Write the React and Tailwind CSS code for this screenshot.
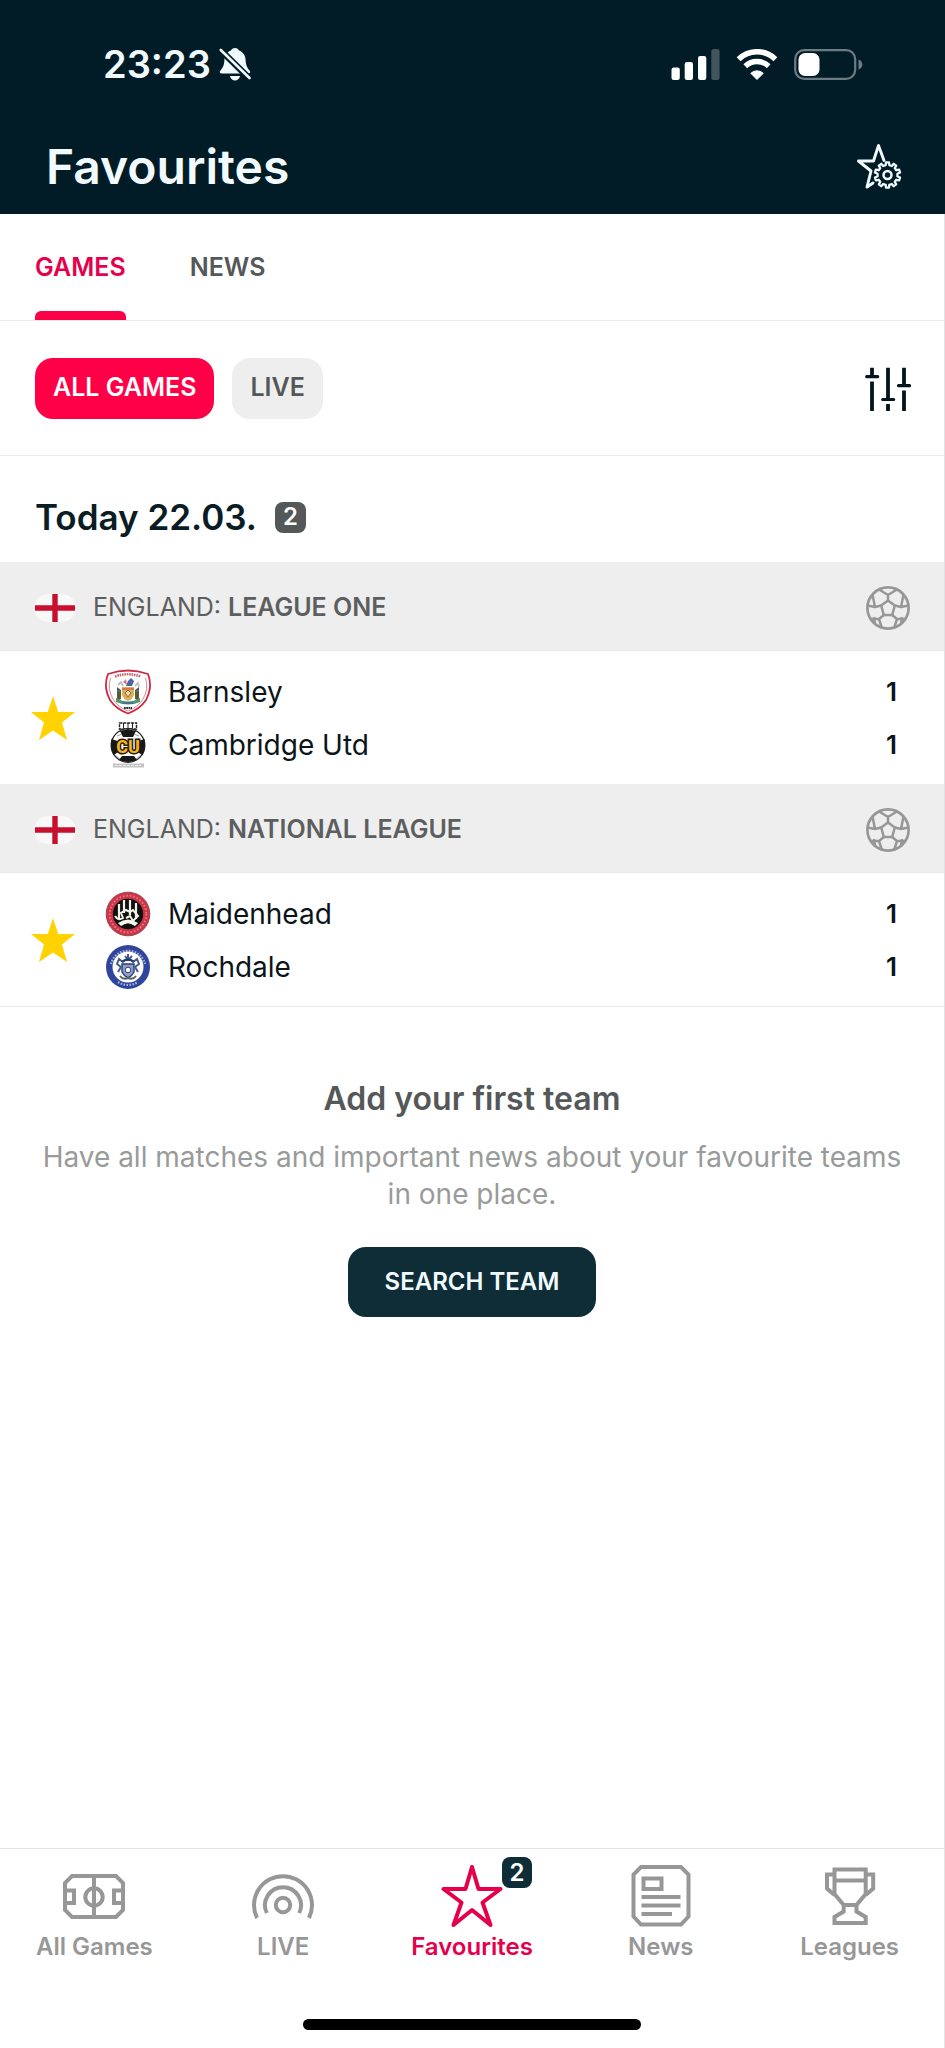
import { useState } from 'react';

const BellOff = () => (
  <svg viewBox="0 0 34 34" className="h-[34px] w-[34px]" aria-hidden="true">
    <path d="M16 1c-2 0-3.400 1-4 2.600C8 5 5.600 8.500 5.400 13c-.2 5-1.400 7.500-4 10.500C.2 25 .8 26.500 2.600 26.500h26.800c1.800 0 2.400-1.500 1.200-3-2.600-3-3.800-5.500-4-10.500C26.400 8.500 24 5 20 3.600 19.400 2 18 1 16 1z" fill="#f1fbff" />
    <path d="M11 29h10c-.6 2.800-2.500 4.500-5 4.500S11.600 31.800 11 29z" fill="#f1fbff" />
    <path d="M0 1.500l32 31.500" stroke="#011c26" strokeWidth="6.500" />
    <path d="M1.800 3l28.700 28" stroke="#f1fbff" strokeWidth="2.600" strokeLinecap="round" />
  </svg>
);

const Signal = () => (
  <svg viewBox="0 0 49 31" className="h-[31px] w-[49px]" aria-hidden="true">
    <g fill="#fff">
      <rect x="0.500" y="18.500" width="8.300" height="12.500" rx="2.200" />
      <rect x="13.700" y="13" width="8.300" height="18" rx="2.200" />
      <rect x="27" y="7" width="8.300" height="24" rx="2.200" />
      <rect x="40.300" y="0" width="8.300" height="31" rx="2.200" fillOpacity="0.250" />
    </g>
  </svg>
);

const Wifi = () => (
  <svg viewBox="0 0 42 31" className="h-[31px] w-[42px]" aria-hidden="true">
    <path d="M2.600 10.200a26.500 26.500 0 0 1 36.800 0" fill="none" stroke="#fff" strokeWidth="5.600" />
    <path d="M9.300 17.200a17 17 0 0 1 23.400 0" fill="none" stroke="#fff" strokeWidth="5.400" />
    <path d="M21 30.500l-6.200-6.200a9 9 0 0 1 12.400 0z" fill="#fff" stroke="#fff" strokeLinejoin="round" />
  </svg>
);

const Battery = () => (
  <svg viewBox="0 0 69 31" className="h-[31px] w-[69px]" aria-hidden="true">
    <rect x="1.200" y="1.200" width="60" height="28.600" rx="9" fill="none" stroke="#6b7c84" strokeWidth="2.200" />
    <path d="M64.500 10.500c2.600.8 3.800 2.700 3.800 5s-1.200 4.200-3.800 5z" fill="#6b7c84" />
    <rect x="4.500" y="4" width="21" height="23" rx="6.500" fill="#fff" />
  </svg>
);

// toothed outline for the settings gear
const gearPath = (cx, cy, outer, inner, teeth) => {
  const step = (Math.PI * 2) / teeth;
  const pts = [];
  for (let i = 0; i < teeth; i++) {
    const a = i * step - Math.PI / 2;
    [[-0.29, inner], [-0.19, outer], [0.19, outer], [0.29, inner]].forEach(([o, r]) => {
      pts.push(`${(cx + r * Math.cos(a + o * step)).toFixed(2)} ${(cy + r * Math.sin(a + o * step)).toFixed(2)}`);
    });
  }
  return `M${pts.join('L')}Z`;
};

const StarSettings = () => (
  <svg viewBox="0 0 45 45" className="h-[45px] w-[45px]" fill="none" stroke="#f1fbff" strokeWidth="2.900" strokeLinejoin="round" aria-hidden="true">
    <path d="M27 16.500L21.500 1.500 16.500 17H1.500l12.500 10-4 16 6-4" strokeLinecap="round" />
    <path d={gearPath(30.500, 31, 12.800, 10, 10)} strokeWidth="2.300" />
    <circle cx="30.500" cy="31" r="4" strokeWidth="2.500" />
  </svg>
);

const Sliders = () => (
  <svg viewBox="0 0 46 46" className="h-[46px] w-[46px]" fill="none" stroke="#04161d" aria-hidden="true">
    <path d="M7 .7V9M7 14.500V44M23 .7V32M23 37v7M39 .7V18M39 23.500V44" strokeWidth="3.800" />
    <path d="M1.700 9.700h11M17.700 32.500h11M33.500 18.700h11" strokeLinecap="round" strokeWidth="3.200" />
  </svg>
);

const Ball = () => (
  <svg viewBox="0 0 44 44" className="h-11 w-11 shrink-0" fill="none" stroke="#979797" strokeWidth="2.500" strokeLinejoin="round" aria-hidden="true">
    <circle cx="22" cy="22" r="20.600" strokeWidth="2.700" />
    <path d="M22 14.500l6.800 5-2.600 9.500h-8.400l-2.600-9.500z" />
    <path d="M22 14.500V9M13 3.500L22 9l9-5.500M28.800 19.500L35 21M37.500 8.500L35 21l7.500-1.500M15.200 19.500L9 21M6.500 8.500L9 21l-7.500-1.500" />
    <path d="M26.200 29l4.800 4M39 33h-8l-3 9.500M17.800 29L13 33M5 33h8l3 9.500M36 31l-1 7M8 31l1 7" />
  </svg>
);

const England = () => (
  <svg viewBox="0 0 40 28" className="h-7 w-10 shrink-0" role="img" aria-label="England">
    <rect width="40" height="28" rx="14" ry="11" fill="#f8f8f8" />
    <path d="M0 14h40M20 0v28" stroke="#c8102e" strokeWidth="5.400" />
  </svg>
);

const GoldStar = () => (
  <svg viewBox="0 0 44 44" className="h-11 w-11" aria-hidden="true">
    <path d="M22 0l5.200 16H44L31 26.500 36 44l-14-9.500L8 44l5-17.500L0 16h16.800z" fill="#ffd200" />
  </svg>
);

const Barnsley = () => (
  <svg viewBox="0 0 46 46" className="h-[46px] w-[46px]" aria-hidden="true">
    <path d="M3 5Q23-2 43 5q5 13-2 26-6 9-18 13.500Q11 40 5 31-2 18 3 5z" fill="#fff" stroke="#cc2b45" strokeWidth="1.800" />
    <path d="M5.500 9Q2 20 8 30q5 8 15 12M40.500 9Q44 20 38 30q-5 8-15 12" fill="none" stroke="#de8796" />
    <path d="M10 7.500Q23 3 36 7.500" fill="none" stroke="#cf6474" strokeWidth="2.600" strokeDasharray="1.600 .8" />
    <path d="M13 16l3-3 2 4M30 17l3-3 1 4" fill="none" stroke="#b9bfc3" strokeWidth="1.800" />
    <path d="M23 12l3-3 3 3-2 5h-6z" fill="#4a65a5" />
    <path d="M18 13l3-3 1 6z" fill="#d9707f" />
    <path d="M12 18l4 3v9l-4 2zM34 18l-4 3v9l4 2z" fill="#65542f" />
    <path d="M17 18h12v8q-2 5-6 6-4-1-6-6z" fill="#d9b15b" />
    <path d="M17 20h12M20 24l3-3 3 3-3 4z" stroke="#b84b37" fill="#f1dfad" />
    <path d="M11 29q12 7 24 0v4q-12 5-24 0z" fill="#4e9b70" />
    <path d="M12 22h3M31 22h3M18 34h10" stroke="#4173a1" strokeWidth="2" />
    <path d="M19 39h8" stroke="#2a3135" strokeWidth="2" strokeDasharray="1.800 .5" />
  </svg>
);

const Cambridge = () => (
  <svg viewBox="0 0 46 46" className="h-[46px] w-[46px]" aria-hidden="true">
    <path d="M14.500 1h17v6h-17z" fill="#fff" stroke="#222" strokeWidth="1.400" strokeDasharray="3 .8" />
    <path d="M18.500 1v5M23 1v5M27.500 1v5" stroke="#222" />
    <circle cx="23" cy="23.500" r="16.800" fill="#fff" stroke="#222" strokeWidth="1.300" />
    <path d="M15 9l8-2 8 2-3 6H18zM6.500 17l6 2 1 11-5 3q-4-8-2-16zM39.500 17l-6 2-1 11 5 3q4-8 2-16zM17 34h12l3 4q-9 4-18 0z" fill="#181818" />
    <path d="M12 14l5-2M34 14l-5-2M11 34l4 3M35 34l-4 3" stroke="#999" />
    <text x="23" y="31" textAnchor="middle" fontFamily="Roboto" fontWeight="700" fontSize="18" fill="#f4b51f" stroke="#24190a" strokeWidth="3" paintOrder="stroke">CU</text>
    <path d="M8 41.500h31v4H8z" fill="#c4c4c4" />
    <path d="M10 43.500h26" stroke="#eee" strokeDasharray="3 1" />
  </svg>
);

const Maidenhead = () => (
  <svg viewBox="0 0 46 46" className="h-[46px] w-[46px]" aria-hidden="true">
    <circle cx="23" cy="23" r="21.800" fill="#cf3548" stroke="#9f4350" strokeWidth="1" />
    <circle cx="23" cy="23" r="18.300" fill="none" stroke="#e2808b" strokeWidth="1.800" strokeDasharray="1.500 2" />
    <circle cx="23" cy="23" r="15.200" fill="#101010" />
    <path d="M14 13v16M19 9v13M25 9v15M31 12v16" stroke="#f2f2e8" strokeWidth="2.200" />
    <path d="M10 25q3 5 8 2l-2-5 5-3 4 2 3-2 5 6-5 5-3-5-4 2" fill="none" stroke="#f2f2e8" strokeWidth="2" />
    <path d="M13 32q10-7 20 0l-3 3q-7-5-14 0z" fill="#f5f5ef" />
    <path d="M18 35q5-4 10 0" stroke="#111" fill="none" />
  </svg>
);

const Rochdale = () => (
  <svg viewBox="0 0 46 46" className="h-[46px] w-[46px]" aria-hidden="true">
    <circle cx="23" cy="23" r="22" fill="#2f459b" />
    <path d="M6 20a17.500 17.500 0 0 1 34 0M13 38q10 6 20 0" fill="none" stroke="#a6b4df" strokeWidth="2.200" strokeDasharray="1.600 1.400" />
    <circle cx="23" cy="23" r="15.500" fill="#fff" />
    <path d="M17 20h12v8q-2 4-6 6-4-2-6-6z" fill="#91a0c2" stroke="#273c76" strokeWidth="1.400" />
    <path d="M23 10v6M20 12l3 4 4-4M18 18l-4-3-2 5 4 3-3 5M28 18l4-3 2 5-4 3 3 5" fill="none" stroke="#425b91" strokeWidth="2" />
    <path d="M17 18q6-5 12 0" stroke="#293c71" strokeWidth="2.500" fill="none" />
    <circle cx="23" cy="26" r="2.800" fill="#fff" stroke="#263e80" />
    <path d="M15 32q3 4 8 2 5 2 8-2" stroke="#58605e" strokeWidth="2" fill="none" />
  </svg>
);

const NavIcon = ({ children }) => (
  <svg viewBox="0 0 62 62" className="h-[62px] w-[62px]" fill="none" stroke="currentColor" strokeWidth="4" aria-hidden="true">
    {children}
  </svg>
);

const navItems = [
  {
    label: 'All Games',
    icon: (
      <NavIcon>
        <path d="M9 11h44l7 7v27L53 52H9L2 45V18zM31 11v41M2 25.500h9v12.500H2M60 25.500h-9v12.500h9" />
        <circle cx="31" cy="32" r="8.700" />
      </NavIcon>
    ),
  },
  {
    label: 'LIVE',
    icon: (
      <NavIcon>
        <path d="M5 53a29 29 0 1 1 52 0M14.800 48a18 18 0 1 1 32.400 0" />
        <circle cx="31" cy="40" r="7.200" />
      </NavIcon>
    ),
  },
  {
    label: 'Favourites',
    count: 2,
    icon: (
      <NavIcon>
        <path d="M31 2l6.500 22h22L41.500 37.500 49.500 60 31 45 12.500 60 20.500 37.500 2.500 24h22z" strokeLinejoin="round" />
      </NavIcon>
    ),
  },
  {
    label: 'News',
    icon: (
      <NavIcon>
        <path d="M11 2h40l7.500 7.500v42L51 59.500H11l-7.500-8V9.500z" />
        <path d="M13.500 13.500h18v10.500h-18zM11.500 32h39M11.500 40.500h39M11.500 49H42" />
      </NavIcon>
    ),
  },
  {
    label: 'Leagues',
    icon: (
      <NavIcon>
        <path d="M15.500 4.500h31.200V29L37.500 40v6.500l9.200 5.500v6H15.500v-6l9.200-5.500V40L15.500 29zM15.500 15.500h31.200M24.700 40h12.800M15.500 9.500H8v14l7.500 6.500M46.700 9.500h7.500v14l-7.500 6.500" />
      </NavIcon>
    ),
  },
];

const leagues = [
  {
    country: 'ENGLAND',
    name: 'LEAGUE ONE',
    teams: [
      { name: 'Barnsley', score: 1, crest: <Barnsley /> },
      { name: 'Cambridge Utd', score: 1, crest: <Cambridge /> },
    ],
  },
  {
    country: 'ENGLAND',
    name: 'NATIONAL LEAGUE',
    teams: [
      { name: 'Maidenhead', score: 1, crest: <Maidenhead /> },
      { name: 'Rochdale', score: 1, crest: <Rochdale /> },
    ],
  },
];

const League = ({ league }) => (
  <section>
    <div className="flex h-[89px] items-center border-b border-[#e8e8e8] bg-[#eeeeee] pt-1 pr-[34px] pl-[35px]">
      <England />
      <h3 className="ml-[18px] flex-1 text-[25px] text-[#5c5e5f]">
        {league.country}: <span className="font-semibold">{league.name}</span>
      </h3>
      <Ball />
    </div>
    <div className="flex items-center pt-[14px] pr-[47px] pb-[13px] pl-[31px]">
      <button type="button" aria-label="Remove from favourites">
        <GoldStar />
      </button>
      <ul className="ml-[30px] flex-1">
        {league.teams.map((team) => (
          <li key={team.name} className="flex h-[53px] items-center text-[28px] text-[#0b1519]">
            {team.crest}
            <span className="ml-[17px] flex-1">{team.name}</span>
            <span className="text-[26px] font-semibold">{team.score}</span>
          </li>
        ))}
      </ul>
    </div>
  </section>
);

export default function App() {
  const [tab, setTab] = useState('GAMES');
  const [filter, setFilter] = useState('ALL GAMES');
  const [active, setActive] = useState('Favourites');

  return (
    <div className="flex min-h-screen flex-col bg-white font-['Inter',sans-serif]">
      <header className="bg-[#011c26] text-[#f1fbff]">
        <div className="flex h-[124px] items-center justify-between pt-1 pr-[82px] pl-[103px]">
          <div className="flex items-center gap-2">
            <time className="text-[38px] font-semibold">23:23</time>
            <BellOff />
          </div>
          <div className="flex items-center gap-4">
            <Signal />
            <Wifi />
            <Battery />
          </div>
        </div>
        <div className="flex h-[90px] items-start justify-between pr-[43px] pl-[46px]">
          <h1 className="text-5xl leading-[86px] font-semibold">Favourites</h1>
          <button type="button" aria-label="Favourite settings" className="mt-5">
            <StarSettings />
          </button>
        </div>
      </header>

      <main className="flex-1 border-r border-[#e0e3e4]">
        <div role="tablist" className="flex h-[107px] gap-16 border-b border-[#eaeaea] px-[35px] text-[25px] font-semibold">
          {['GAMES', 'NEWS'].map((name) => (
            <button
              key={name}
              type="button"
              role="tab"
              aria-selected={tab === name}
              onClick={() => setTab(name)}
              className={`flex flex-col justify-between pt-[35px] ${tab === name ? 'text-[#e6004c]' : 'text-[#555859]'}`}
            >
              {name}
              <span className={`h-[9px] w-full rounded-t-md ${tab === name ? 'bg-[#ff0046]' : ''}`} />
            </button>
          ))}
        </div>

        <div className="flex h-[135px] items-center gap-[18px] border-b border-[#eaeaea] pr-[33px] pl-[35px]">
          {['ALL GAMES', 'LIVE'].map((name) => (
            <button
              key={name}
              type="button"
              onClick={() => setFilter(name)}
              className={`h-[61px] rounded-[18px] px-[18px] text-[25px] font-semibold ${filter === name ? 'bg-[#ff0046] text-white' : 'bg-[#eeeeee] text-[#555859]'}`}
            >
              {name}
            </button>
          ))}
          <button type="button" aria-label="Filter" className="ml-auto pt-1">
            <Sliders />
          </button>
        </div>

        <div className="flex h-[106px] items-center gap-[18px] px-[35px] pt-4">
          <h2 className="text-[35px] font-semibold text-[#0a1d25]">Today 22.03.</h2>
          <span className="flex h-[31px] w-[31px] items-center justify-center rounded-lg bg-[#555859] text-2xl font-semibold text-white">2</span>
        </div>

        {leagues.map((league) => (
          <League key={league.name} league={league} />
        ))}

        <section className="flex flex-col items-center border-t border-[#eaeaea] px-8 pt-[72px] text-center">
          <h2 className="text-[32px] leading-10 font-semibold text-[#555859]">Add your first team</h2>
          <p className="mt-5 text-[28px] leading-[37px] text-[#999b9b]">
            Have all matches and important news about your favourite teams in one place.
          </p>
          <button type="button" className="mt-[34px] h-[70px] rounded-[18px] bg-[#0f2d37] px-[37px] text-2xl font-semibold text-[#f1fbff]">
            SEARCH TEAM
          </button>
        </section>
      </main>

      <footer className="border-t border-r border-[#e4e4e4] pt-4 pb-[18px]">
        <nav className="grid grid-cols-5">
          {navItems.map((item) => (
            <a
              key={item.label}
              href="#"
              onClick={() => setActive(item.label)}
              className={`flex flex-col items-center gap-1 text-2xl leading-8 font-semibold ${active === item.label ? 'text-[#e6004c]' : 'text-[#979797]'}`}
            >
              <span className="relative">
                {item.icon}
                {item.count && (
                  <span className="absolute -top-2 -right-[29px] flex h-[31px] w-[30px] items-center justify-center rounded-lg bg-[#0f2d37] text-white">
                    {item.count}
                  </span>
                )}
              </span>
              {item.label}
            </a>
          ))}
        </nav>
        <div className="mx-auto mt-14 h-[11px] w-[338px] rounded-full bg-black" />
      </footer>
    </div>
  );
}
